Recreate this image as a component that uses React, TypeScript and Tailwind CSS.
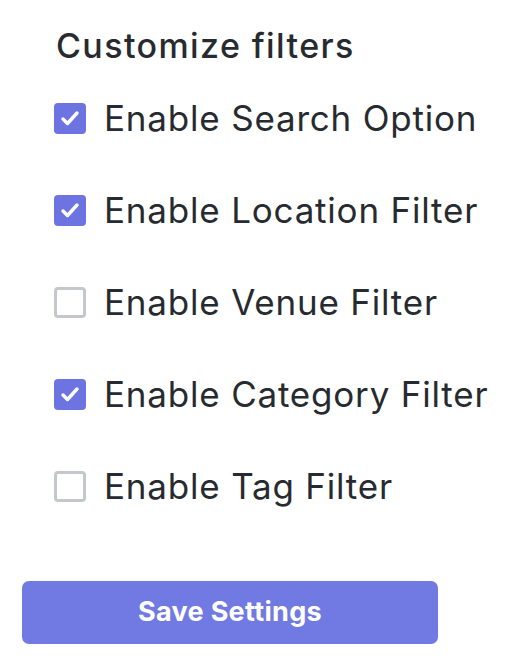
import React, { useState } from 'react';

const filters = [
  { key: 'search', label: 'Enable Search Option', on: true },
  { key: 'location', label: 'Enable Location Filter', on: true },
  { key: 'venue', label: 'Enable Venue Filter', on: false },
  { key: 'category', label: 'Enable Category Filter', on: true },
  { key: 'tag', label: 'Enable Tag Filter', on: false },
];

function Check({ checked }: { checked: boolean }) {
  if (checked) {
    return (
      <span className="w-[32px] h-[31px] rounded-[4px] bg-[#6d74e2] flex items-center justify-center shrink-0">
        <svg width="32" height="31" viewBox="0 0 32 31" fill="none">
          <path d="M9 16l4.5 4.5L23 10" stroke="white" strokeWidth="3.4" strokeLinecap="round" strokeLinejoin="round" />
        </svg>
      </span>
    );
  }
  return <span className="w-[32px] h-[31px] rounded-[4px] border-[3px] border-[#c4c8cc] bg-white shrink-0" />;
}

export default function App() {
  const [state, setState] = useState<Record<string, boolean>>(
    Object.fromEntries(filters.map(f => [f.key, f.on]))
  );

  return (
    <div className="min-h-screen bg-white font-['Inter',sans-serif] text-[#272b30]">
      <div className="pt-[26px] px-[22px]">
        <h2 className="pl-[34px] text-[34px] font-medium leading-[40px] tracking-[1.4px]">Customize filters</h2>
        <div className="mt-[32px] pl-[32px] flex flex-col gap-[52px]">
          {filters.map(f => (
            <label
              key={f.key}
              className="flex items-center gap-[18px] h-[40px] cursor-pointer"
              onClick={() => setState(s => ({ ...s, [f.key]: !s[f.key] }))}
            >
              <Check checked={state[f.key]} />
              <span className="text-[35px] leading-[40px] tracking-[0.8px]">{f.label}</span>
            </label>
          ))}
        </div>
        <button className="mt-[75px] w-[416px] h-[63px] rounded-[7px] bg-[#717ae3] text-white text-[27px] font-bold tracking-[0.3px]">
          Save Settings
        </button>
      </div>
    </div>
  );
}
